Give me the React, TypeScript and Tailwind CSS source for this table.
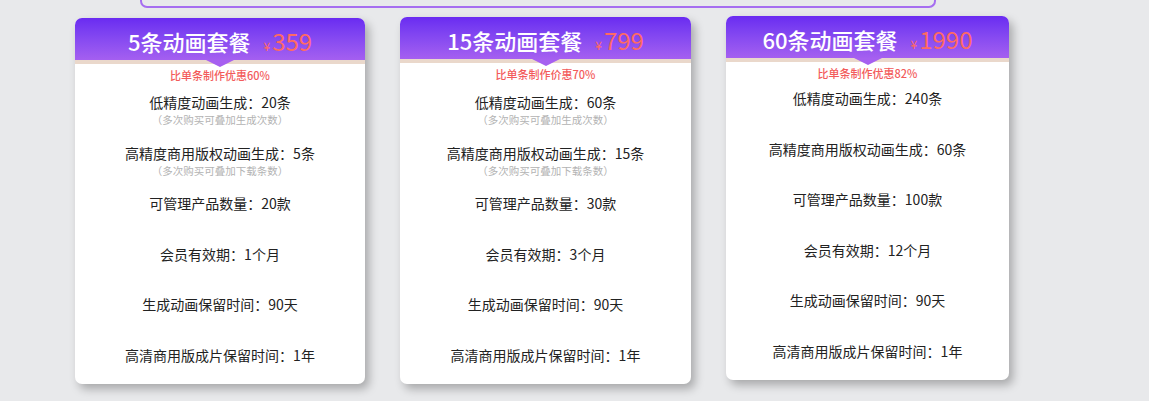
const cards = [
  {
    count: "5条动画套餐",
    price: "359",
    discount: "比单条制作优惠60%",
    width: "w-[290px]",
    shift: "mt-0",
    rowsTop: "pt-[9px]",
    rows: [
      { main: "低精度动画生成：20条", sub: "（多次购买可叠加生成次数）" },
      { main: "高精度商用版权动画生成：5条", sub: "（多次购买可叠加下载条数）" },
      { main: "可管理产品数量：20款" },
      { main: "会员有效期：1个月" },
      { main: "生成动画保留时间：90天" },
      { main: "高清商用版成片保留时间：1年" },
    ],
  },
  {
    count: "15条动画套餐",
    price: "799",
    discount: "比单条制作价惠70%",
    width: "w-[291px]",
    shift: "-mt-[1px]",
    rowsTop: "pt-[10px]",
    rows: [
      { main: "低精度动画生成：60条", sub: "（多次购买可叠加生成次数）" },
      { main: "高精度商用版权动画生成：15条", sub: "（多次购买可叠加下载条数）" },
      { main: "可管理产品数量：30款" },
      { main: "会员有效期：3个月" },
      { main: "生成动画保留时间：90天" },
      { main: "高清商用版成片保留时间：1年" },
    ],
  },
  {
    count: "60条动画套餐",
    price: "1990",
    discount: "比单条制作优惠82%",
    width: "w-[283px]",
    shift: "-mt-[2px]",
    rowsTop: "pt-[7px]",
    rows: [
      { main: "低精度动画生成：240条" },
      { main: "高精度商用版权动画生成：60条" },
      { main: "可管理产品数量：100款" },
      { main: "会员有效期：12个月" },
      { main: "生成动画保留时间：90天" },
      { main: "高清商用版成片保留时间：1年" },
    ],
  },
]

function PlanCard({ card }: { card: (typeof cards)[number] }) {
  return (
    <div
      className={`${card.width} ${card.shift} shrink-0 bg-white rounded-[7px] overflow-hidden shadow-[4px_5px_10px_rgba(0,0,0,0.28)]`}
    >
      {/* header */}
      <div className="relative h-[42px] bg-gradient-to-b from-[#6a2af1] to-[#a55ff0] flex items-center justify-center gap-[13px] pt-[4px]">
        <span className="text-white text-[22px] font-medium leading-none">{card.count}</span>
        <span className="flex items-baseline text-[#ff6a63] leading-none">
          <span className="text-[12px] mr-[2px]">¥</span>
          <span className="text-[24px]">{card.price}</span>
        </span>
        <div className="absolute left-1/2 -translate-x-1/2 top-full w-0 h-0 border-l-[14px] border-r-[14px] border-t-[7px] border-l-transparent border-r-transparent border-t-[#a660f0] z-10" />
      </div>
      <div className="h-[4px] bg-[#ead8cb]" />

      <div className="flex flex-col items-center pt-[3px] pb-[19px]">
        <div className="text-[11px] leading-[16px] text-[#f35b5b] font-medium">{card.discount}</div>
        <div className={`${card.rowsTop} w-full flex flex-col`}>
          {card.rows.map((row) => (
            <div key={row.main} className="h-[50.6px] flex flex-col items-center last:h-[20px]">
              <div className="text-[14px] leading-[20px] text-[#222]">{row.main}</div>
              {row.sub && (
                <div className="text-[10.5px] leading-[14px] text-[#b3b3b3] mt-[1px]">{row.sub}</div>
              )}
            </div>
          ))}
        </div>
      </div>
    </div>
  )
}

export default function App() {
  return (
    <div
      className="w-[1149px] h-[401px] overflow-hidden bg-[#e8e9eb]"
      style={{ fontFamily: '"Noto Sans CJK SC", "Noto Sans", sans-serif' }}
    >
      <div className="ml-[140px] w-[796px] h-[8px] border-2 border-t-0 border-[#a66ef0] rounded-b-[7px]" />
      <div className="mt-[10px] pl-[75px] flex items-start gap-[35px]">
        {cards.map((card) => (
          <PlanCard key={card.count} card={card} />
        ))}
      </div>
    </div>
  )
}
